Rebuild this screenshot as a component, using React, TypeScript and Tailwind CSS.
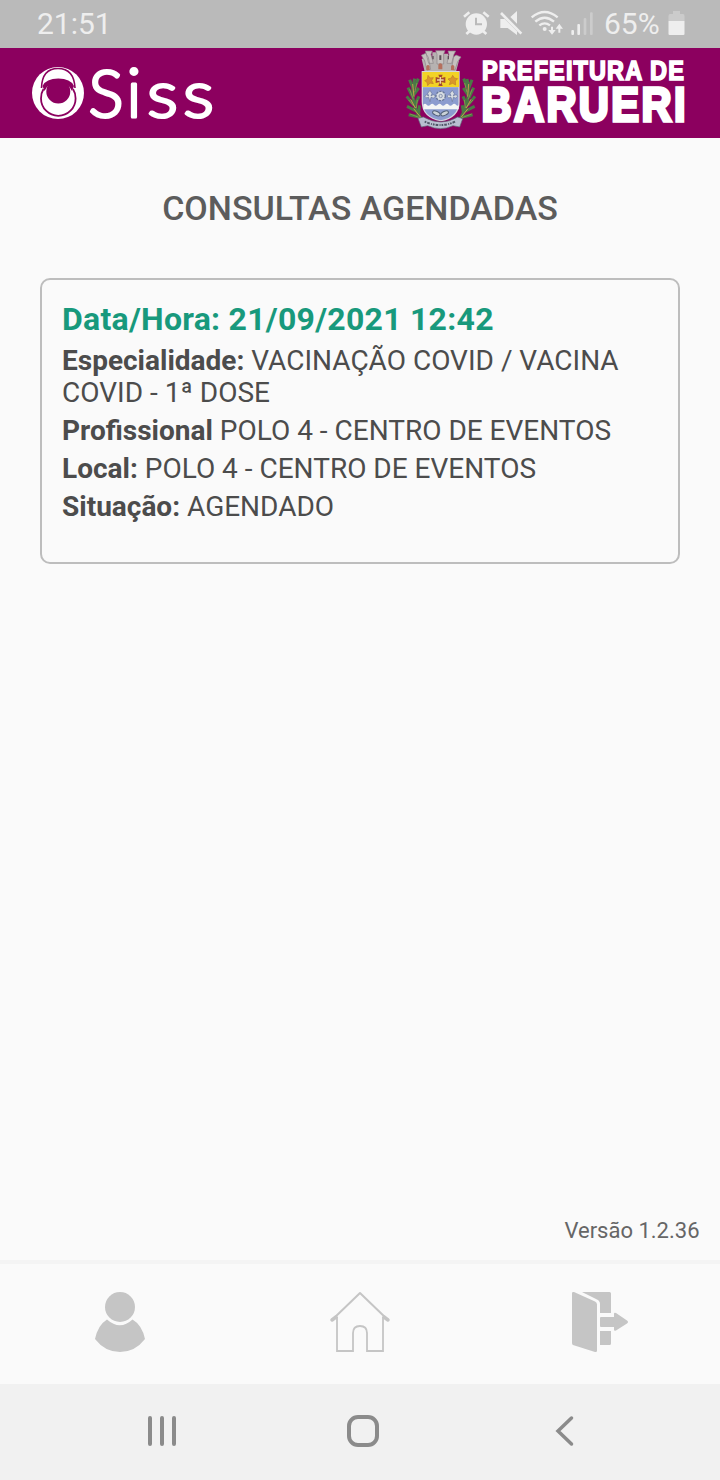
import type { ReactNode } from "react";

function StatusBar() {
  return (
    <div className="flex h-12 shrink-0 items-center justify-between bg-[#bababa] pl-[37px] pr-[35px] text-[30px] leading-[48px] text-[#eeeeee]">
      <span>21:51</span>
      <div className="flex items-center">
        <svg width="140" height="48" viewBox="60 0 420 144" fill="#eeeeee" className="block">
          <circle cx="106" cy="72" r="32" />
          <path d="M69 50 85 37M143 50 127 37M86 93 76 102M126 93 136 102" stroke="#eeeeee" strokeWidth="8" />
          <path d="M105 53v20h18" fill="none" stroke="#bababa" strokeWidth="6" />
          <path d="M178 57h13l37 37v11l-28-21h-22ZM208 51l20-18v38Z" />
          <path d="M180 39l61 62" stroke="#eeeeee" strokeWidth="8" />
          <g fill="none" stroke="#eeeeee" strokeWidth="7">
            <path d="M272 52Q311 20 350 52M283 65Q311 41 339 65M295 76Q311 64 327 76" />
            <path d="M333 80v18M355 98V78" strokeWidth="6" />
          </g>
          <circle cx="311" cy="87" r="6" />
          <path d="M322 90h22l-11 14ZM344 86h22l-11-15Z" />
          <rect x="391" y="90" width="8" height="15" rx="3" />
          <rect x="409" y="72" width="8" height="33" rx="3" />
          <rect x="428" y="54" width="8" height="51" rx="3" fill="#cccccc" />
          <rect x="447" y="37" width="8" height="68" rx="3" fill="#cccccc" />
        </svg>
        <span className="ml-[3px] w-[56px] whitespace-nowrap">65%</span>
        <svg width="17" height="48" viewBox="0 0 17 48" className="ml-2 block">
          <path d="M5 11h7v3h3q1.500 0 1.500 2v5H.5v-5q0-2 1.500-2h3Z" fill="#cbcbcb" />
          <path d="M.5 21h16v13q0 1-1 1h-14q-1 0-1-1Z" fill="#eeeeee" />
        </svg>
      </div>
    </div>
  );
}

function SissLogo() {
  return (
    <svg width="190" height="90" viewBox="28 48 190 90" className="block">
      <ellipse cx="58" cy="93" rx="26" ry="26" fill="#fff" />
      <path d="M41.500 88Q42 68.500 58 68.500T75 88" fill="none" stroke="#8c005f" strokeWidth="1.600" />
      <path d="M43.500 89Q41 93 41 98.500A17.300 17.300 0 0 0 75.600 98.500Q75.600 93 73 89" fill="none" stroke="#8c005f" strokeWidth="1.800" />
      <path d="M42.500 86Q46 78.500 58.300 78.500T74 86L72 91Q68 82 58.300 82T44.500 91Z" fill="#8c005f" />
      <circle cx="58.300" cy="91.500" r="12" fill="#8c005f" />
      <g fill="#fff" stroke="#fff" strokeWidth="3" strokeLinejoin="round" fontFamily="Lato" fontWeight="300">
        <text x="88.500" y="117" fontSize="65.500">S</text>
        <text x="126.500" y="117" fontSize="67">i</text>
        <text x="147" y="117" fontSize="66" textLength="31" lengthAdjust="spacingAndGlyphs">s</text>
        <text x="183" y="117" fontSize="66" textLength="31" lengthAdjust="spacingAndGlyphs">s</text>
      </g>
    </svg>
  );
}

function Crest() {
  return (
    <svg width="87" height="90" viewBox="0 12 261 270" className="block overflow-visible">
      <g transform="translate(0 8)">
        <g fill="none" stroke="#4a7a45" strokeWidth="9">
          <path d="M84 228Q37 172 56 96M185 228Q230 164 213 97" />
          <path d="M70 211 38 204M63 194 33 179M54 176 32 149M51 153 36 123M53 131 41 99M68 202 70 176M58 172 69 149M52 146 68 124M55 123 67 96" />
          <path d="M199 211 230 204M206 194 236 179M215 176 237 149M219 153 233 123M216 131 228 99M203 202 199 176M212 172 201 149M217 146 202 124M214 123 203 96" />
        </g>
        <g fill="none" stroke="#7f9a4a" strokeWidth="3">
          <path d="M71 213 42 202M60 184 38 160M52 158 41 128M56 137 63 109M61 184 64 160" />
          <path d="M198 213 227 202M209 184 231 160M217 158 228 128M213 137 206 109M208 184 205 160" />
        </g>
        <path d="M74 212 53 186M58 184 44 158M54 150 50 112M195 212 216 186M211 184 225 158M215 150 218 112" fill="none" stroke="#c79a4c" strokeWidth="3" />
      </g>
      <path d="M77 45 86 83H180L190 46 171 39 167 52 158 50 156 29H142V47H127V25H109V47L101 29H92L99 51 86 52 86 41Z" fill="#b6b2b1" />
      <g fill="#c6c1bf" stroke="#8c8589" strokeWidth="2">
        <path d="m76 34 13-6 8 12 7 36-11 3-7-29ZM88 21h21l-4 10 7 27H98L91 31ZM119 20h28l-4 10v30h-20V31ZM156 21h23l-5 10-7 27h-14l6-27ZM180 33l15 6-10 14-8 25-11-1 7-38Z" />
      </g>
      <g fill="#b56f5c">
        <path d="M91 67q5-8 10 0v11H91ZM127 62q6-8 12 0v14h-12ZM165 67q5-8 10 0v11h-10Z" />
      </g>
      <path d="M109 36h4v10h-4ZM130 34h6v14h-6ZM155 36h4v10h-4Z" fill="#5d5057" />
      <path d="M77 81h114v92q0 49-57 59-57-12-57-59Z" fill="#d4d7de" />
      <path d="M81 130h106v48q-2 41-53 51-51-10-53-51Z" fill="#8c9ccf" />
      <path d="M79 84h110v45H79Z" fill="#f2d326" />
      <path d="m96 94 6 8 10-1-5 8 5 10-10-2-7 8-2-10-7-5 8-4ZM170 94l5 8 10 2-7 7 1 12-9-5-10 4 3-10-7-7 10-3Z" fill="#d9962b" stroke="#c17d2b" strokeWidth="2" />
      <path d="m127 92 13 0-4 10 12-3v18l-12-3 4 12h-13l4-12-12 3V99l12 3Z" fill="#a5482d" />
      <path d="M131 99h4v20h-4ZM123 106h20v4h-20Z" fill="#ead3a6" />
      <g fill="#d8dde2" stroke="#68769a" strokeWidth="2">
        <path d="m102 139 6 10-3 7q10-8 13 1-5 9-13 3l-3 13-4-13q-9 5-12-4 5-7 12 0l-3-8ZM169 139l6 10-3 7q10-8 13 1-5 9-13 3l-3 13-4-13q-9 5-12-4 5-7 12 0l-3-8Z" />
        <circle cx="134" cy="156" r="14" strokeDasharray="7 3" strokeWidth="4" />
        <circle cx="134" cy="156" r="5" />
      </g>
      <path d="M82 182q5-6 10 0t11 0 11 0 11 0 11 0 11 0 11 0 11 0 11 0 8 0v14H82Z" fill="#f4f5f5" />
      <g fill="#cbd2d8" stroke="#516078" strokeWidth="3">
        <ellipse cx="121" cy="208" rx="12" ry="6" transform="rotate(25 121 208)" />
        <ellipse cx="146" cy="208" rx="12" ry="6" transform="rotate(-25 146 208)" />
      </g>
      <path d="m66 223 16-4q54 30 103 0l15 5-9 25-20-4q-37 18-76 0l-19 4Z" fill="#b9bfd0" stroke="#616878" strokeWidth="2" />
      <path d="M86 233q49 21 93-1" fill="none" stroke="#515868" strokeWidth="6" strokeDasharray="5 3 8 4 3 3" />
    </svg>
  );
}

function Header() {
  return (
    <header className="flex h-[90px] shrink-0 justify-between bg-[#8c005f] pl-7">
      <SissLogo />
      <div className="flex">
        <Crest />
        <svg width="237" height="90" viewBox="0 48 237 90" className="block overflow-visible">
          <g fill="#fff" stroke="#fff" strokeLinejoin="miter" fontFamily="Liberation Sans" fontWeight="700">
            <text transform="translate(-1 80) scale(.87 1)" fontSize="27" strokeWidth="1.700" textLength="232" lengthAdjust="spacing">PREFEITURA DE</text>
            <text transform="translate(-1.500 120.500) scale(.85 1)" fontSize="49" strokeWidth="3.400" textLength="240" lengthAdjust="spacing">BARUERI</text>
          </g>
        </svg>
      </div>
    </header>
  );
}

function Field({ label, children }: { label: string; children: ReactNode }) {
  return (
    <p className="mb-1.5 text-[28px] leading-8 text-[#4c4c4c]">
      <b className="font-bold">{label}</b> {children}
    </p>
  );
}

function TabBar() {
  return (
    <nav className="grid h-[124px] shrink-0 grid-cols-3 border-t-4 border-[#f4f4f4] pt-7">
      <svg width="52" height="64" viewBox="94 1290 52 64" fill="#c5c5c5" className="mt-[-2px] block justify-self-center">
        <circle cx="120" cy="1307" r="15" />
        <path d="M107 1319.500Q120 1331 132.500 1319.500 142 1325 145 1339 135 1352 120 1352T95 1339Q98 1325 107 1319.500Z" />
      </svg>
      <svg width="62" height="64" viewBox="329 1290 62 64" fill="none" stroke="#c5c5c5" strokeLinejoin="round" className="mt-[-2px] block justify-self-center">
        <path d="M337 1317v34h16v-18q0-7 7-7t7 7v18h16v-34" strokeWidth="1.800" strokeLinejoin="miter" />
        <path d="m332 1320 28-27 28 27" strokeWidth="2" strokeLinecap="round" />
        <path d="m332 1320 4-3M388 1320l-4-3" strokeWidth="3.500" strokeLinecap="round" />
      </svg>
      <svg width="60" height="64" viewBox="570 1290 60 64" fill="#c5c5c5" className="mt-[-2px] block justify-self-center">
        <path d="M574 1292 595 1301.500q2 1 2 3v46q0 2-2 1.500l-22-7q-1-.5-1-2v-50q0-1.500 2-1Z" />
        <path d="M582 1292h27.500q1.500 0 1.500 1.500v19.500h-11v-9q0-3-3-4.500ZM600 1331h11v12.500q0 1.500-1.500 1.500H600ZM601 1317h13v-3q0-2 2-1l11 7.500q2 1.500 0 3l-11 7q-2 1-2-1v-2.500h-13q-1 0-1-1v-8q0-1 1-1Z" />
      </svg>
    </nav>
  );
}

function SystemBar() {
  return (
    <div className="flex h-24 shrink-0 items-start bg-[#f1f1f1] pl-[148px] pt-[31px]">
      <svg width="28" height="32" viewBox="0 0 28 32" className="block" stroke="#8b8b8b" strokeWidth="4" strokeLinecap="round">
        <path d="M2 3v26M14 3v26M26 3v26" />
      </svg>
      <svg width="32" height="32" viewBox="0 0 32 32" className="ml-[171px] block" fill="none" stroke="#8b8b8b" strokeWidth="4">
        <rect x="2" y="2" width="28" height="28" rx="9" />
      </svg>
      <svg width="20" height="32" viewBox="0 0 20 32" className="ml-[176px] block" fill="none" stroke="#8b8b8b" strokeWidth="3.500" strokeLinecap="round">
        <path d="M16.500 3 3 16l13.500 13" />
      </svg>
    </div>
  );
}

export default function App() {
  return (
    <div className="flex h-[1480px] w-[720px] flex-col bg-[#fafafa] font-['Roboto',sans-serif]">
      <StatusBar />
      <Header />
      <main className="flex flex-1 flex-col px-10 pt-[50px]">
        <h1 className="text-center text-[34px] font-medium leading-10 text-[#5c5c5c]">CONSULTAS AGENDADAS</h1>
        <section className="mt-[50px] h-[286px] rounded-[10px] border-2 border-[#bdbdbd] px-5 pt-5">
          <h2 className="mb-[7px] text-[32px] font-bold leading-[38px] tracking-[0.26px] text-[#18997c]">Data/Hora: 21/09/2021 12:42</h2>
          <Field label="Especialidade:">VACINAÇÃO COVID / VACINA COVID - 1ª DOSE</Field>
          <Field label="Profissional">POLO 4 - CENTRO DE EVENTOS</Field>
          <Field label="Local:">POLO 4 - CENTRO DE EVENTOS</Field>
          <Field label="Situação:">AGENDADO</Field>
        </section>
        <p className="mb-[15px] mr-[-19.5px] mt-auto text-right text-[22px] leading-[28px] text-[#666666]">Versão 1.2.36</p>
      </main>
      <TabBar />
      <SystemBar />
    </div>
  );
}
